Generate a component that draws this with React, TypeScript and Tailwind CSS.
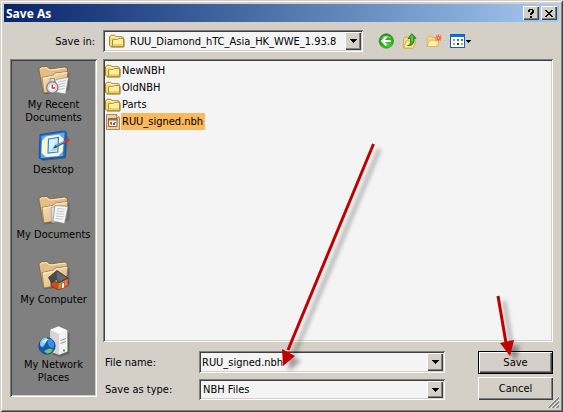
import type { ReactNode, SVGProps } from "react"

const places = [
  { label: "My Recent Documents", icon: <RecentIcon /> },
  { label: "Desktop", icon: <DesktopIcon /> },
  { label: "My Documents", icon: <DocumentsIcon /> },
  { label: "My Computer", icon: <ComputerIcon /> },
  { label: "My Network Places", icon: <NetworkIcon /> },
]

const files = [
  { name: "NewNBH", folder: true },
  { name: "OldNBH", folder: true },
  { name: "Parts", folder: true },
  { name: "RUU_signed.nbh", folder: false },
]

const sunken =
  "shadow-[inset_1px_1px_#808080,inset_-1px_-1px_#fff,inset_2px_2px_#404040,inset_-2px_-2px_#d4d0c8]"
const raised =
  "bg-[#d4d0c8] shadow-[inset_1px_1px_#fff,inset_-1px_-1px_#404040,inset_-2px_-2px_#808080]"

function Icon16(props: SVGProps<SVGSVGElement>) {
  return <svg viewBox="0 0 16 16" className="size-4 shrink-0" aria-hidden="true" {...props} />
}

function FolderIcon() {
  return (
    <Icon16>
      <path d="M2 14.5h12.5l1-1V6" fill="none" stroke="#6b6b6b" strokeOpacity=".5" />
      <path d="M.5 4 2 2.3h3.8L7 3.7h6.3L14.5 5v8.3h-13l-1-1z" fill="#f6dc7c" stroke="#a8821c" />
      <path d="M1.5 4.6 2.5 3.4h2.8l1.2 1.4h5.8" fill="none" stroke="#fff8c8" />
      <path d="M3.5 6.7h4.7L9.3 5.5h5.2v7.8h-11z" fill="#fbe88c" stroke="#b58d22" />
      <path d="M4.5 7.7h4.2l1-1.2h3.8" fill="none" stroke="#fffde0" />
      <path d="M5 8.5h8.5v2.3H5z" fill="#fff3a4" />
      <path d="M4 11.3h10v1.5H4z" fill="#f4cd4c" />
    </Icon16>
  )
}

function FileIcon() {
  return (
    <Icon16>
      <path d="M1.5.5h10L14.500 3.500v12h-13z" fill="#ecd0a4" stroke="#b08656" />
      <path d="M11.500.5v3h3" fill="#fff4dc" stroke="#b08656" />
      <path d="M3.500 4.500h8.500v8h-8.500z" fill="#fdf1dc" stroke="#8a6444" />
      <path d="M3 4.500h9.500v2H3z" fill="#94704e" />
      <path d="M5 8h2v2H5z" fill="#d24b38" />
      <path d="M8 9h2v2H8z" fill="#4a62be" />
      <path d="M9 8h2v1H9z" fill="#d27838" />
      <path d="M6 10h1v1H6z" fill="#57914d" />
    </Icon16>
  )
}

function BackIcon() {
  return (
    <Icon16>
      <defs>
        <radialGradient id="back-green" cx=".6" cy=".75" r=".75">
          <stop offset="0" stopColor="#4fd02f" />
          <stop offset="1" stopColor="#1f8c16" />
        </radialGradient>
      </defs>
      <circle cx="8.300" cy="8" r="7.200" fill="url(#back-green)" stroke="#2a8a22" strokeWidth=".7" />
      <path d="M3 6a5.800 5.800 0 0 1 10.600 0C10 4 6 4.500 3 6" fill="#8ddc7c" fillOpacity=".7" />
      <path d="M8.500 3.800 4.300 8l4.200 4.200M4.700 8h8" fill="none" stroke="#fff" strokeWidth="2.200" />
    </Icon16>
  )
}

function UpIcon() {
  return (
    <Icon16>
      <path d="M1.500 15V5.500l1-1.300h3.200l1 1.400h6V13l-2 2z" fill="#f7dd80" stroke="#cfa73a" strokeWidth=".8" />
      <path d="m2 15 1.800-7h10l-2.400 7z" fill="#ffef9e" stroke="#d0a638" strokeWidth=".8" />
      <path d="M5.500 12.500C8.500 12 8.800 10 8.500 5.500H6L9.800.7l4.400 4.500h-2.400c.5 5.500-1.300 8-6.300 7.300z" fill="#3fa82e" stroke="#1c7418" strokeWidth=".8" />
      <path d="M10 2.800v5.500" stroke="#8fd86a" />
    </Icon16>
  )
}

function NewFolderIcon() {
  return (
    <Icon16>
      <path d="M1 13.500v-9l1-1.200h3.200l1.200 1.400h6v7.500l-2 1.300z" fill="#f5d98a" stroke="#d6b04e" strokeWidth=".8" />
      <path d="m1.200 13.500 2.300-6.300h10.200L11 13.500z" fill="#ffefa8" stroke="#dbb044" strokeWidth=".8" />
      <path d="M12.500 1.500v7M9 5h7M10 2.500l5 5M15 2.500l-5 5" stroke="#ff6a34" strokeWidth="1.100" />
      <circle cx="12.500" cy="5" r="1.500" fill="#ffc79b" stroke="#ee4d20" strokeWidth=".8" />
    </Icon16>
  )
}

function ViewsIcon() {
  return (
    <Icon16 shapeRendering="crispEdges">
      <path d="M0 1h15v14H0z" fill="#0a62d0" />
      <path d="M1 4h13v10H1z" fill="#fff" />
      <path d="M1 2h13v2H1z" fill="#0875e4" />
      <path d="M3 6h2v2H3z" fill="#a29acb" />
      <path d="M7 6h2v2H7z" fill="#2886d8" />
      <path d="M11 6h2v2h-2z" fill="#218a31" />
      <path d="M3 10h2v2H3z" fill="#ef815e" />
      <path d="M7 10h2v2H7z" fill="#14399a" />
      <path d="M11 10h2v2h-2z" fill="#cf9d20" />
    </Icon16>
  )
}

function Icon32({ children }: { children: ReactNode }) {
  return (
    <svg viewBox="0 0 32 32" className="size-8" aria-hidden="true">
      {children}
    </svg>
  )
}

// Tan folder that the document and computer places share
function TanFolder() {
  return (
    <>
      <defs>
        <linearGradient id="tan-front" x1="0" y1="0" x2="1" y2="1">
          <stop offset="0" stopColor="#fbe5bd" />
          <stop offset="1" stopColor="#d9ae72" />
        </linearGradient>
      </defs>
      <path d="m6 28.500 22-3 2.500-2V8" fill="none" stroke="#333" strokeOpacity=".35" strokeWidth="2" />
      <path d="M1 5V3.500L3 2l6-.6 2 2.100 2 .3L27 2l2.500 1.500L28 23 5 27z" fill="#e3bd84" stroke="#6e5638" strokeWidth=".7" />
      <path d="m2 4.500 1.500-1.300 5-.6 2 2.100 2.500.3L27 3.200" fill="none" stroke="#ffeac4" />
      <path d="m4 12.500 11-2.200L17.500 8l12.500-1.500L28 24 6 28z" fill="url(#tan-front)" stroke="#8a6a42" strokeWidth=".7" />
      <path d="m5 13.300 10.500-2L18 9l11-1.400" fill="none" stroke="#fff3d6" />
    </>
  )
}

function RecentIcon() {
  return (
    <Icon32>
      <TanFolder />
      <path d="m18 14.500 12.500-2.200L27.500 29 16 27z" fill="#f4f4f4" stroke="#8b8b8b" strokeWidth=".7" />
      <path d="m20 17 8-1.500M20 19.500l7.500-1.500M20 22l7-1.300M20 24.500l6.500-1" stroke="#b5b5b5" strokeWidth=".8" />
      <path d="M12 13.500h4.500V17H12z" fill="#ddd" stroke="#777" strokeWidth=".7" />
      <circle cx="14.300" cy="22.500" r="5.600" fill="#e8e8e6" stroke="#858585" strokeWidth="1.400" />
      <circle cx="14.300" cy="22.500" r="3.800" fill="#fff" stroke="#c3c3c3" strokeWidth=".7" />
      <path d="M14.300 19.500V23h3" fill="none" stroke="#dd3028" strokeWidth="1.400" />
    </Icon32>
  )
}

function DesktopIcon() {
  return (
    <Icon32>
      <path d="m4 30 23-2.500 2-22" fill="none" stroke="#444" strokeOpacity=".5" strokeWidth="2" />
      <path d="M2 4.500 25.500 1l3 1-1.500 25L4 29.500 1 28z" fill="#1c6cd0" stroke="#154b9b" strokeWidth=".8" />
      <path d="m3.500 6 23-3.500L25 26 3 28z" fill="#58aef0" />
      <path d="m8 6.500 13-2 4.500 4L25 21l-4.500 5L8 27l-4.500-4 .5-12z" fill="#fdf6d2" />
      <path d="m10.500 9 10-1.500-.7 14.500-9.800 1z" fill="#d8f0ff" stroke="#2f86d8" strokeWidth="1.200" />
      <path d="m12 21 6.500-9v8.500z" fill="#a4d7f8" />
      <path d="m17.500 16.500 10-5" stroke="#2c5c94" strokeWidth="2.400" />
      <path d="m18 15.700 9-4.400" stroke="#8ec4ee" strokeWidth=".8" />
      <path d="m28 11 2-1" stroke="#d82c19" strokeWidth="3" strokeLinecap="round" />
      <path d="m15 18.500 2.500-3 1.300 2z" fill="#263d57" />
    </Icon32>
  )
}

function DocumentsIcon() {
  return (
    <Icon32>
      <TanFolder />
      <path d="m13 12.500 8-1.500-1 16-6 .5z" fill="#dedede" stroke="#999" strokeWidth=".7" />
      <path d="m17 10.500 13 1-3.500 17L15 26z" fill="#f7f7f7" stroke="#888" strokeWidth=".7" />
      <path d="m19 13.500 8 .8M18.500 16l8 .8M18.200 18.500l8 .8M17.800 21l8 .8M17.400 23.500l7.500.8" stroke="#b8b8b8" strokeWidth=".8" />
    </Icon32>
  )
}

function ComputerIcon() {
  return (
    <Icon32>
      <TanFolder />
      <path d="m13 20 8 3 8-5 1 1v6.500L20.500 30 13 26z" fill="#c8501a" stroke="#6a2c10" strokeWidth=".7" />
      <path d="m20.500 23 9-4.500v6.800l-9 4.200z" fill="#ec7a34" />
      <path d="m10.500 17.500 8.500-7 11 7.500-9.500 5-2-3.500-5 3.500z" fill="#4a4b4e" stroke="#2c2c30" strokeWidth=".7" />
      <path d="m19 11.500 9.800 6.600-8 4-2-4.600z" fill="#68696c" />
      <path d="m23.500 23.500 3-1.500v5.500l-3 1.300z" fill="#fff" stroke="#873b14" strokeWidth=".6" />
    </Icon32>
  )
}

function NetworkIcon() {
  return (
    <Icon32>
      <path d="m15 28.500 7 2.500 8.500-3V8" fill="none" stroke="#333" strokeOpacity=".4" strokeWidth="2" />
      <path d="m12 4.500 8.500-3.500 9 4v21.500L21 30l-9-3.500z" fill="#e7e7e7" stroke="#7c7c7c" strokeWidth=".7" />
      <path d="m12.500 4.700 8-3.200 8.500 3.700-8 3.500z" fill="#fafafa" />
      <path d="m12.300 5 8.700 4v20.500l-8.700-3.300z" fill="#d6d6d6" />
      <path d="m21 9 8.200-3.500v20.800L21 29.500z" fill="#f2f2f2" />
      <path d="m22.500 15.500 5.500-2M22.500 18.500l5.500-2" stroke="#8f8f8f" />
      <path d="M25 25.500h2" stroke="#32b52b" strokeWidth="2" />
      <circle cx="9" cy="21" r="8.200" fill="#1a55b8" stroke="#123b7c" strokeWidth=".8" />
      <path d="M2 19c0-4 3-6.500 7-6.500l-1 5L5 22c-2 0-3-1-3-3" fill="#82cfff" />
      <path d="m10 13.500 4 1 2.500 4.500-1 4-4-1-2-4z" fill="#3b8fe0" />
      <path d="m6 26 5-2.500 4 1-2 3-4 1.200z" fill="#6cc85a" />
      <path d="m4 17 4-3.500 2.500.5L7 18z" fill="#d6f3ff" />
    </Icon32>
  )
}

function DropArrow() {
  return (
    <svg viewBox="0 0 7 4" className="h-1 w-[7px]" shapeRendering="crispEdges" aria-hidden="true">
      <path d="M0 0h7v1H0zM1 1h5v1H1zM2 2h3v1H2zM3 3h1v1H3z" />
    </svg>
  )
}

interface ArrowProps {
  className: string
  width: number
  height: number
  line: string
  head: string
}

function Arrow({ className, width, height, line, head }: ArrowProps) {
  return (
    <svg
      width={width}
      height={height}
      className={`pointer-events-none absolute overflow-visible drop-shadow-[6px_5px_2px_rgba(0,0,0,0.35)] ${className}`}
      aria-hidden="true"
    >
      <path d={line} stroke="#c00000" strokeWidth="3" />
      <path d={head} fill="#c00000" />
    </svg>
  )
}

export default function App() {
  return (
    <div className="relative flex min-h-screen w-full flex-col bg-[#d4d0c8] p-1 font-['DejaVu_Sans_Condensed','DejaVu_Sans',sans-serif] text-[11px] leading-[13px] text-black shadow-[inset_1px_1px_#d4d0c8,inset_-1px_-1px_#404040,inset_2px_2px_#fff,inset_-2px_-2px_#808080]">
      <header className="flex h-[18px] items-center gap-0.5 bg-linear-to-r from-[#0a246a] to-[#a6caf0] px-0.5">
        <h1 className="flex-1 font-['Open_Sans',sans-serif] text-[12px] font-bold text-white">Save As</h1>
        <button aria-label="Help" className={`flex h-3.5 w-4 items-center justify-center ${raised}`}>
          <svg viewBox="0 0 8 9" className="h-[9px] w-2" shapeRendering="crispEdges" aria-hidden="true">
            <path d="M1 1h1V0h4v1h1v3H6v1H5v1H3V4h1V3h1V1H3v2H1zM3 7h2v2H3z" />
          </svg>
        </button>
        <button aria-label="Close" className={`flex h-3.5 w-4 items-center justify-center ${raised}`}>
          <svg viewBox="0 0 8 7" className="h-[7px] w-2" shapeRendering="crispEdges" aria-hidden="true">
            <path d="M0 0h2v1h1v1h2V1h1V0h2v1H7v1H6v1H5v1h1v1h1v1h1v1H6V6H5V5H3v1H2v1H0V6h1V5h1V4h1V3H2V2H1V1H0z" />
          </svg>
        </button>
      </header>

      <div className="flex flex-1 flex-col px-1.5 pt-2 pb-2">
        <div className="flex items-center">
          <label htmlFor="save-in" className="w-[93px] pr-2 text-right">
            Save in:
          </label>
          <div className={`relative flex h-[22px] max-w-[260px] flex-1 bg-[#f4f4f4] p-0.5 ${sunken}`}>
            <span className="pointer-events-none absolute top-[3px] left-1.5">
              <FolderIcon />
            </span>
            <select id="save-in" className="w-full min-w-0 appearance-none overflow-hidden pr-4 pl-[25px] outline-none">
              <option>RUU_Diamond_hTC_Asia_HK_WWE_1.93.8</option>
            </select>
            <span className={`pointer-events-none absolute inset-y-0.5 right-0.5 flex w-4 items-center justify-center ${raised}`}>
              <DropArrow />
            </span>
          </div>
          <div className="ml-[15px] flex gap-2">
            <button aria-label="Back"><BackIcon /></button>
            <button aria-label="Up one level"><UpIcon /></button>
            <button aria-label="Create new folder"><NewFolderIcon /></button>
            <button aria-label="Views" className="flex items-center">
              <ViewsIcon />
              <svg viewBox="0 0 5 3" className="h-[3px] w-[5px]" shapeRendering="crispEdges" aria-hidden="true">
                <path d="M0 0h5v1H0zM1 1h3v1H1zM2 2h1v1H2z" />
              </svg>
            </button>
          </div>
        </div>

        <div className="mt-[7px] flex flex-1 gap-1.5">
          <nav className={`mb-[3px] w-[87px] bg-[#808080] px-0.5 pt-1.5 ${sunken}`}>
            {places.map((place) => (
              <button key={place.label} className="flex h-[65px] w-full flex-col items-center px-1">
                {place.icon}
                <span className="mt-px">{place.label}</span>
              </button>
            ))}
          </nav>

          <main className="flex min-w-0 flex-1 flex-col">
            <ul className={`flex-1 bg-[#f4f4f4] px-0.5 py-[3px] ${sunken}`}>
              {files.map((file) => (
                <li key={file.name} className="flex h-[17px] items-center">
                  {file.folder ? <FolderIcon /> : <FileIcon />}
                  <span className={file.folder ? "px-px leading-[17px]" : "bg-[#fbb85c] pr-0.5 pl-px leading-[17px]"}>
                    {file.name}
                  </span>
                </li>
              ))}
            </ul>

            <form className="mt-[9px] flex gap-[33px]" onSubmit={(e) => e.preventDefault()}>
              <div className="flex flex-1 flex-col gap-1.5">
                <div className="flex items-center">
                  <label htmlFor="file-name" className="w-24 pl-0.5">
                    File name:
                  </label>
                  <div className={`flex h-[22px] min-w-0 flex-1 bg-[#f4f4f4] p-0.5 ${sunken}`}>
                    <input id="file-name" defaultValue="RUU_signed.nbh" className="min-w-0 flex-1 px-px outline-none" />
                    <button type="button" aria-label="Recent names" className={`flex w-4 items-center justify-center ${raised}`}>
                      <DropArrow />
                    </button>
                  </div>
                </div>
                <div className="flex items-center">
                  <label htmlFor="file-type" className="w-24 pl-0.5">
                    Save as type:
                  </label>
                  <div className={`relative flex h-[21px] min-w-0 flex-1 bg-[#f4f4f4] p-0.5 ${sunken}`}>
                    <select id="file-type" className="w-full appearance-none pl-0.5 outline-none">
                      <option>NBH Files</option>
                    </select>
                    <span className={`pointer-events-none absolute inset-y-0.5 right-0.5 flex w-4 items-center justify-center ${raised}`}>
                      <DropArrow />
                    </span>
                  </div>
                </div>
              </div>
              <div className="flex w-[75px] flex-col gap-[3px]">
                <button
                  type="submit"
                  className="h-[23px] bg-[#d4d0c8] shadow-[inset_0_0_0_1px_#000,inset_2px_2px_#fff,inset_-2px_-2px_#404040,inset_-3px_-3px_#808080]"
                >
                  Save
                </button>
                <button type="button" className={`h-[23px] ${raised}`}>
                  Cancel
                </button>
              </div>
            </form>
          </main>
        </div>
      </div>

      <svg viewBox="0 0 12 12" className="pointer-events-none absolute right-1 bottom-1 size-3" aria-hidden="true">
        <path d="M0 12 12 0M4 12l8-8M8 12l4-4" stroke="#fff" />
        <path d="M1.500 12 12 1.500M5.500 12 12 5.500M9.500 12 12 9.500" stroke="#808080" strokeWidth="1.600" />
      </svg>

      <Arrow
        className="top-[144px] left-[282px]"
        width={93}
        height={222}
        line="M91.500 0 6 206"
        head="m0 205 13 7-12 10z"
      />
      <Arrow
        className="top-[296px] left-[496px]"
        width={20}
        height={60}
        line="M2 0 10 47"
        head="m4 47 14-3-4 16z"
      />
    </div>
  )
}
